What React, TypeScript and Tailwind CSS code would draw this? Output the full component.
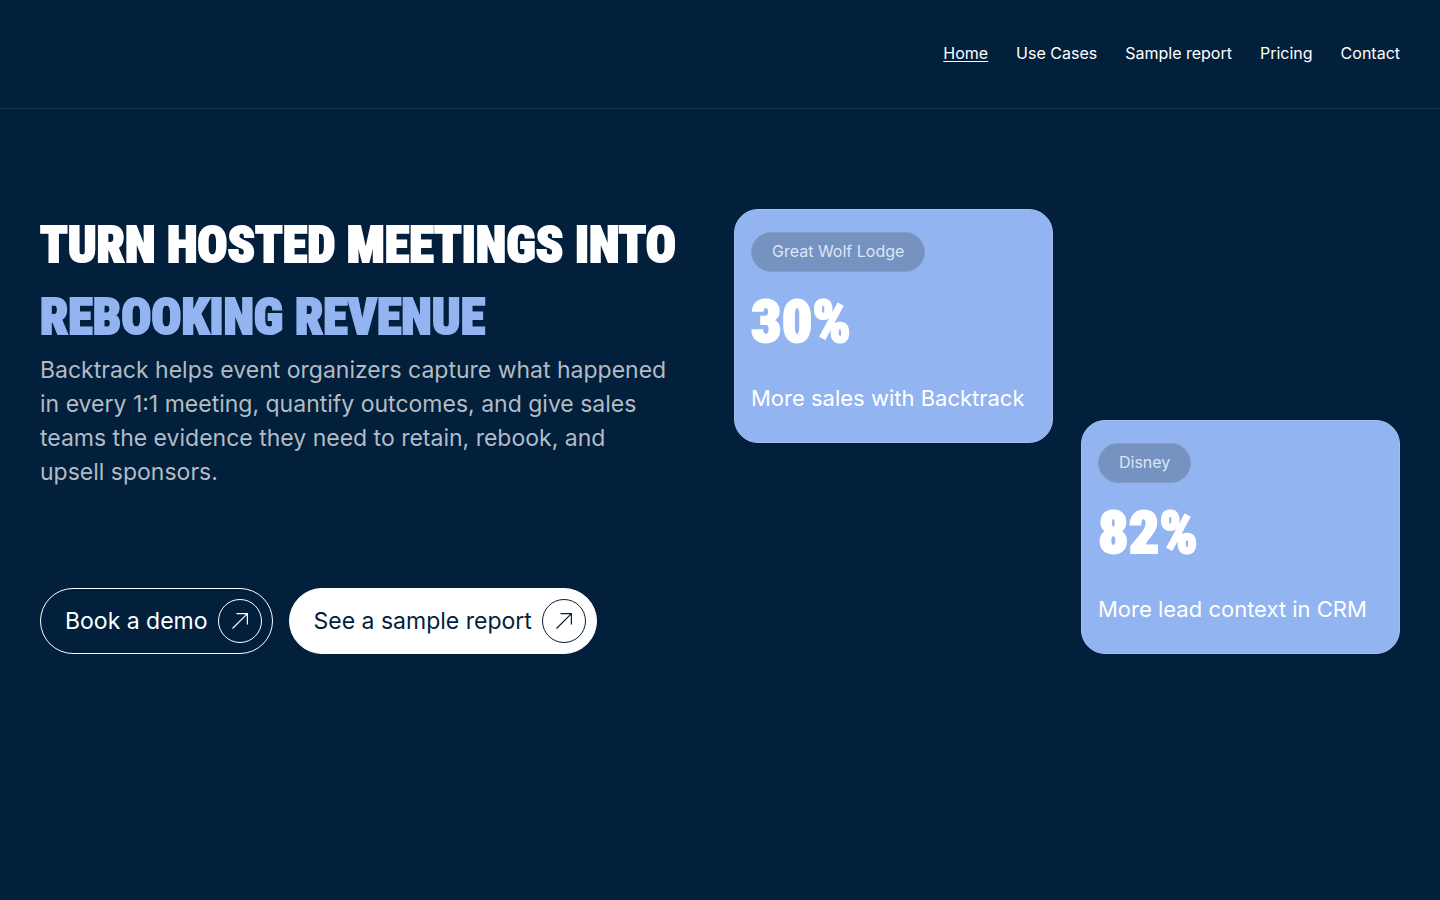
const navLinks = ['Home', 'Use Cases', 'Sample report', 'Pricing', 'Contact'];

const stats = [
  { client: 'Great Wolf Lodge', value: '30%', text: 'More sales with Backtrack', place: 'self-start' },
  { client: 'Disney', value: '82%', text: 'More lead context in CRM', place: 'self-end' },
];

// heavy condensed display face, thickened a little with a stroke
const displayFont =
  "font-['Roboto_Condensed','Open_Sans_Condensed',Roboto,sans-serif] font-black [-webkit-text-stroke:2px_currentColor]";

function ArrowCircle() {
  return (
    <span className="flex size-11 items-center justify-center rounded-full border border-current">
      <svg className="size-4" viewBox="0 0 16 16" fill="none" stroke="currentColor" strokeWidth="1.2" aria-hidden="true">
        <path d="M0.5 15.5L15.4 0.6M4.5 0.6H15.4V11.5" />
      </svg>
    </span>
  );
}

export default function App() {
  return (
    <div className="min-h-screen bg-[#021f3b] font-[Inter,sans-serif] text-white">
      <header className="flex h-[109px] items-center justify-end border-b border-[#19344e] px-10 pb-0.5">
        <nav className="flex gap-7 text-base">
          {navLinks.map((label, i) => (
            <a key={label} href="#" className={i === 0 ? 'underline underline-offset-2' : 'hover:underline'}>
              {label}
            </a>
          ))}
        </nav>
      </header>

      <main className="grid grid-cols-2 gap-7 px-10 pt-[100px]">
        <div>
          <h1 className={`${displayFont} text-[50px] leading-[72px] whitespace-nowrap uppercase`}>
            Turn hosted meetings into
            <span className="block text-[#92b4f0]">rebooking revenue</span>
          </h1>
          <p className="max-w-[632px] text-[23px] leading-[34px] text-[#b3bcc4]">
            Backtrack helps event organizers capture what happened in every 1:1 meeting, quantify outcomes, and give
            sales teams the evidence they need to retain, rebook, and upsell sponsors.
          </p>
          <div className="mt-[99px] flex gap-4 text-[23px] whitespace-nowrap">
            <a href="#" className="flex h-[66px] items-center gap-2.5 rounded-full border border-white pr-2.5 pl-6">
              Book a demo
              <ArrowCircle />
            </a>
            <a
              href="#"
              className="flex h-[66px] items-center gap-2.5 rounded-full border border-white bg-white pr-2.5 pl-6 text-[#021f3b]"
            >
              See a sample report
              <ArrowCircle />
            </a>
          </div>
        </div>

        <div className="grid grid-cols-2 gap-7">
          {stats.map((s) => (
            <article
              key={s.client}
              className={`${s.place} rounded-3xl border border-[#a2bff2] bg-[#92b4f0] px-4 pt-[22px] pb-[26px]`}
            >
              <span className="inline-flex h-10 items-center rounded-full border border-[#7f9ccb] bg-[#7592c0] px-5 pb-0.5 text-base text-[#dce6f6]">
                {s.client}
              </span>
              <p className={`${displayFont} mt-5 text-6xl`}>{s.value}</p>
              <p className="mt-7 text-[22px] leading-9 whitespace-nowrap">{s.text}</p>
            </article>
          ))}
        </div>
      </main>
    </div>
  );
}
